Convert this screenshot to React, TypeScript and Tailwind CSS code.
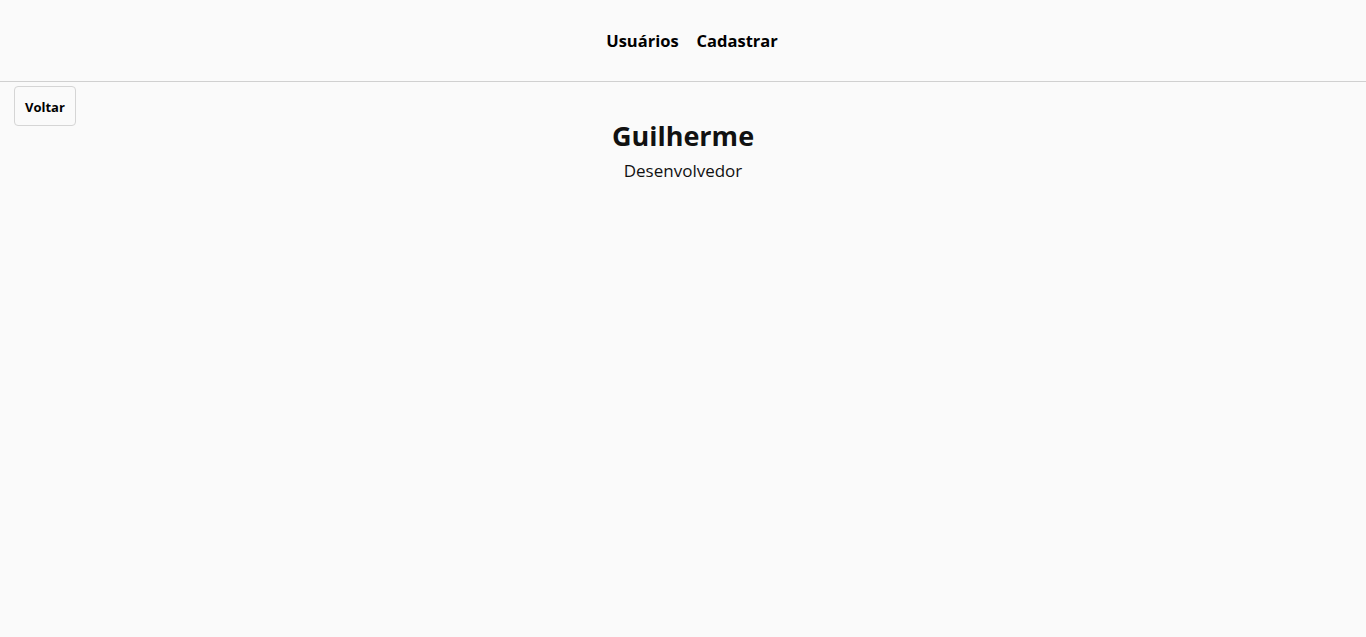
export default function App() {
  return (
    <div className="min-h-screen bg-[#fafafa] text-[#111] font-['Open_Sans',sans-serif]">
      <header className="flex h-[82px] items-center justify-center gap-[18px] border-b border-[#d0d0d0] pl-[18px] pt-[2px]">
        <a className="text-[16.5px] font-bold text-black">Usuários</a>
        <a className="text-[16.5px] font-bold text-black">Cadastrar</a>
      </header>
      <main className="grid grid-cols-[1fr_auto_1fr] px-[14px] pt-1">
        <div>
          <button className="h-10 rounded border border-[#d5d5d5] bg-[#fafafa] px-[10px] pt-1 text-[13px] font-bold text-black">
            Voltar
          </button>
        </div>
        <div className="mt-[33px] flex flex-col items-center">
          <h1 className="text-[27px] font-bold leading-[34px]">Guilherme</h1>
          <p className="mt-[6px] text-[17px] leading-[24px]">Desenvolvedor</p>
        </div>
        <div />
      </main>
    </div>
  );
}
